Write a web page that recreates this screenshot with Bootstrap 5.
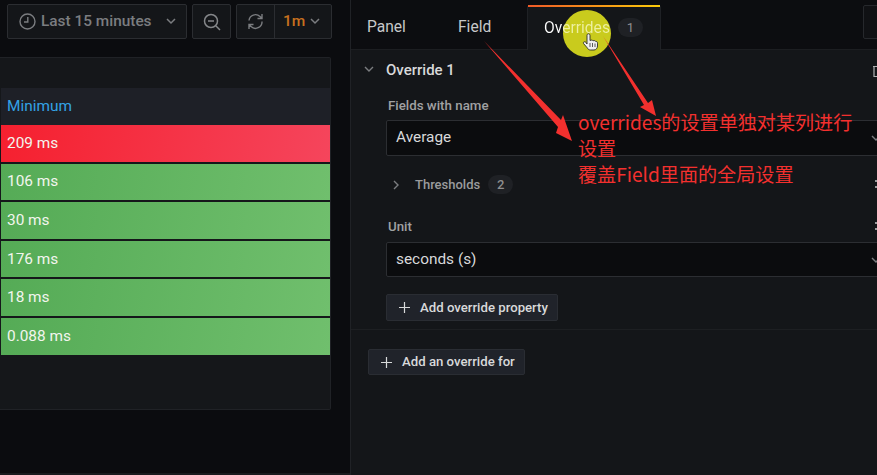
<!doctype html>
<html lang="zh">
<head>
<meta charset="utf-8">
<title>Overrides</title>
<link href="https://cdn.jsdelivr.net/npm/bootstrap@5.3.0/dist/css/bootstrap.min.css" rel="stylesheet">
<style>
html,body{height:475px;width:877px;overflow:hidden;margin:0}
body{background:#0c0d10;font-family:Roboto,"Liberation Sans",sans-serif;color:#d0d1d3;font-size:14px}
.stage{position:relative;width:877px;height:475px;overflow:hidden}
.left-pane{flex:0 0 350px;background:#0b0c0f;height:475px}
.tool-row{height:57px;padding:4px 0 0 7px;gap:5px}
.tool-btn{height:35px;background:#141619;border:1px solid #2b2d31;border-radius:2px;color:#7b7d80;font-weight:500;font-size:15.4px}
.time-btn{width:180px;padding:0 10px 0 11px}
.clock-wrap{gap:5px}
.zoom-btn{width:39px}
.refresh-group{width:96px}
.refresh-a{width:38px;border-right:1px solid #2b2d31;height:100%}
.refresh-b{flex:1;color:#c7701f;height:100%;padding-left:8px;gap:5px;font-size:15.5px}
.data-panel{width:331px;height:353px;background:#15171a;border:1px solid #202226;border-left:0;border-radius:0 2px 2px 0;padding:30px 0 0 1px}
.col-head{height:37px;background:#1e2027;color:#33a2e5;font-size:15.4px;padding-left:6px;display:flex;align-items:center}
.cell{height:36.6px;margin-bottom:2px;padding-left:6px;color:#f2f5ee;font-size:15.4px;display:flex;align-items:center}
.cell-red{background:linear-gradient(100deg,#f5202f,#f5455c)}
.cell-green{background:linear-gradient(100deg,#55ab56,#70bf6d)}
.foot-line{height:2px;margin-top:63px;background:#191b1e}
.edit-pane{flex:0 0 540px;height:475px;border-left:1px solid #202226}
.tab-row{height:49px;background:#0c0d10;position:relative}
.tab-item{color:#c7c8ca;font-size:15.6px;padding-top:18px;line-height:18px}
.tab-panel{margin-left:16px;width:62px}
.tab-field{margin-left:29px}
.tab-over{position:absolute;left:176px;top:5px;width:134px;height:45px;background:#141619;border:1px solid #1f2125;border-top:0;border-bottom:0;padding:13px 0 0 16px;font-size:15.6px;line-height:18px;border-radius:3px 3px 0 0}
.tab-over::before{content:"";position:absolute;left:0;right:0;top:0;height:2px;background:linear-gradient(90deg,#f05a28,#fbca0a)}
.tab-word{position:relative;background:linear-gradient(90deg,#fff 18px,#eef0a0 20px);-webkit-background-clip:text;background-clip:text;color:transparent}
.hl-dot{position:absolute;left:35px;top:5px;width:48px;height:47px;border-radius:50%;background:#c9cb1d}
.count-pill{display:inline-block;width:25px;height:19px;margin-left:8px;border-radius:10px;background:#1f2125;color:#8e8e8e;font-size:13px;line-height:19px;text-align:center;position:relative;vertical-align:1px}
.corner-box{position:absolute;left:512px;top:5px;width:40px;height:34px;border:1px solid #26282c;background:#101114;border-radius:2px}
.edit-body{background:#141619;height:426px;border-top:1px solid #1c1e21}
.over-block{height:280px;border-bottom:1px solid #1d1f22;padding:0 0 0 35px;position:relative}
.over-title{height:40px;font-weight:500;font-size:15px;color:#d8d9da}
.chev-a{position:absolute;left:13px;top:16px}
.f-label{color:#a0a1a3;font-size:13.3px;font-weight:500;line-height:16px;margin-left:2px}
.label-first{margin-top:8px;margin-bottom:6px}
.label-unit{margin-top:5px;margin-bottom:7px}
.f-input{height:35.5px;width:520px;background:#0b0c0e;border:1px solid #2c2e32;border-radius:2px;padding-left:9px;font-size:15.4px;color:#d8d9da;display:flex;align-items:center;position:relative}
.in-chev{position:absolute;left:484px;top:14px}
.thr-row{height:58px;padding:0 0 0 29px;font-size:13px;font-weight:500;color:#9a9b9d;position:relative}
.chev-b{position:absolute;left:7px;top:24px}
.add-btn{width:fit-content;height:27px;background:#20232a;border:1px solid #2a2d33;border-radius:2px;color:#d8d9da;font-weight:500;font-size:13.2px;display:flex;align-items:center;gap:10px;padding:0 9px 0 12px}
.btn-one{margin-top:17px}
.btn-two-wrap{margin:19px 0 0 17px}
.btn-two{height:26px}
.edge-mark{position:absolute;left:524px;width:2px;height:8px;border-top:2px solid #9a9b9d;border-bottom:2px solid #9a9b9d}
.mark-a{top:130px}
.mark-b{top:172px}
.trash-ico{position:absolute;left:873px;top:65px}
.note-text{position:absolute;left:578px;top:109px;color:#f3302e;font-family:"Noto Sans CJK SC",sans-serif;font-size:19.1px;line-height:26px;width:283px}
.overlay-svg{position:absolute;left:0;top:0;pointer-events:none}
</style>
</head>
<body>
<div class="stage d-flex">
  <div class="left-pane">
    <div class="tool-row d-flex">
      <div class="tool-btn time-btn d-flex align-items-center justify-content-between">
        <span class="d-flex align-items-center clock-wrap">
          <svg width="17" height="17" viewBox="0 0 17 17" fill="none" stroke="#7b7d80" stroke-width="1.4"><circle cx="8.5" cy="8.5" r="7.5"/><path d="M8.800 4v5H5"/></svg>
          Last 15 minutes</span>
        <svg width="10" height="7" viewBox="0 0 10 7" fill="none" stroke="#7b7d80" stroke-width="1.5"><path d="M1 1l4 4 4-4"/></svg>
      </div>
      <div class="tool-btn zoom-btn d-flex align-items-center justify-content-center">
        <svg width="18" height="18" viewBox="0 0 18 18" fill="none" stroke="#85878a" stroke-width="1.5"><circle cx="8" cy="8" r="6.5"/><path d="M5 8h6M13 13l4 4"/></svg>
      </div>
      <div class="tool-btn refresh-group d-flex align-items-center">
        <div class="refresh-a d-flex align-items-center justify-content-center">
          <svg width="17" height="17" viewBox="0 0 17 17" fill="none" stroke="#7b7d80" stroke-width="1.4"><path d="M2 7.500A6.500 6.500 0 0 1 13 3.500l2 2M15 8.500A6.500 6.500 0 0 1 4 13.500l-2-2M15 1v4.500h-4.500M2 16v-4.500h4.500"/></svg>
        </div>
        <div class="refresh-b d-flex align-items-center">1m
          <svg width="10" height="7" viewBox="0 0 10 7" fill="none" stroke="#7b7d80" stroke-width="1.5"><path d="M1 1l4 4 4-4"/></svg>
        </div>
      </div>
    </div>
    <div class="data-panel">
      <div class="col-head">Minimum</div>
      <div class="cell cell-red">209 ms</div>
      <div class="cell cell-green">106 ms</div>
      <div class="cell cell-green">30 ms</div>
      <div class="cell cell-green">176 ms</div>
      <div class="cell cell-green">18 ms</div>
      <div class="cell cell-green">0.088 ms</div>
    </div>
    <div class="foot-line"></div>
  </div>
  <div class="edit-pane">
    <div class="tab-row d-flex">
      <div class="tab-item tab-panel">Panel</div>
      <div class="tab-item tab-field">Field</div>
      <div class="tab-over"><div class="hl-dot"></div><span class="tab-word">Overrides</span><span class="count-pill">1</span></div>
      <div class="corner-box"></div>
    </div>
    <div class="edit-body">
      <div class="over-block">
        <svg class="chev-a" width="10" height="7" viewBox="0 0 10 7" fill="none" stroke="#7b7d80" stroke-width="1.4"><path d="M1 1l4 4 4-4"/></svg>
        <div class="over-title d-flex align-items-center">Override 1</div>
        <div class="f-label label-first">Fields with name</div>
        <div class="f-input">Average<svg class="in-chev" width="10" height="7" viewBox="0 0 10 7" fill="none" stroke="#7b7d80" stroke-width="1.4"><path d="M1 1l4 4 4-4"/></svg></div>
        <div class="thr-row d-flex align-items-center">
          <svg class="chev-b" width="7" height="10" viewBox="0 0 7 10" fill="none" stroke="#7b7d80" stroke-width="1.4"><path d="M1 1l4 4-4 4"/></svg>
          Thresholds<span class="count-pill">2</span>
        </div>
        <div class="f-label label-unit">Unit</div>
        <div class="f-input">seconds (s)<svg class="in-chev" width="10" height="7" viewBox="0 0 10 7" fill="none" stroke="#7b7d80" stroke-width="1.4"><path d="M1 1l4 4 4-4"/></svg></div>
        <div class="add-btn btn-one">
          <svg width="11" height="11" viewBox="0 0 11 11" stroke="#d8d9da" stroke-width="1.2"><path d="M5.500 0v11M0 5.500h11"/></svg>
          Add override property
        </div>
        <span class="edge-mark mark-a"></span>
        <span class="edge-mark mark-b"></span>
      </div>
      <div class="btn-two-wrap">
        <div class="add-btn btn-two">
          <svg width="11" height="11" viewBox="0 0 11 11" stroke="#d8d9da" stroke-width="1.2"><path d="M5.500 0v11M0 5.500h11"/></svg>
          Add an override for
        </div>
      </div>
    </div>
  </div>
  <svg class="trash-ico" width="4" height="12" viewBox="0 0 4 12" fill="none" stroke="#b0b1b3" stroke-width="1.2"><path d="M0 1.500h4M1 1.500V11.500H4"/></svg>
  <svg class="overlay-svg" width="877" height="475" viewBox="0 0 877 475">
    <polygon fill="#f3302e" points="484,41 561,120 563,115 572,141 556,133 558,127"/>
    <polygon fill="#f3302e" points="603,36 648,103 652,100 656,116 640,107 644,105"/>
    <path d="M587 44V35.500c0-2.300 3-2.300 3 0V40.500c1.500-.7 2.500-.5 3 .3 1.300-.5 2.300-.2 2.800.7 1-.2 1.700.5 1.700 1.700V46c0 2-1.500 4-3.500 4h-3.500c-1.500 0-2.500-.8-3.300-2.200L583.500 43.500c-.8-1.500 1.500-2.500 2.500-1z" fill="#efefef" stroke="#2a2a2a" stroke-width=".9"/>
    <path d="M590 43v4M592.500 43v4M595 43.500v3.500" stroke="#333" stroke-width=".8"/>
  </svg>
  <div class="note-text">overrides的设置单独对某列进行设置<br>覆盖Field里面的全局设置</div>
</div>
</body>
</html>
